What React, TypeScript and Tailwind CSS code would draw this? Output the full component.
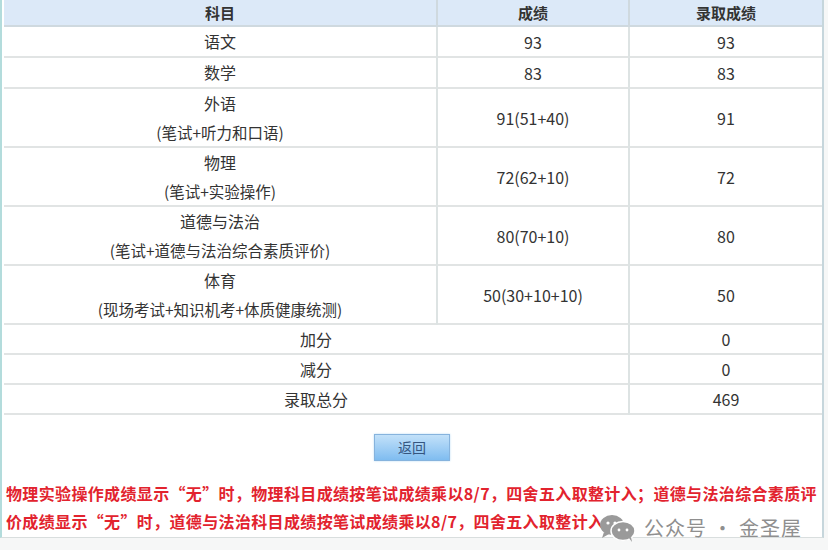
import React from "react";

const font = { fontFamily: '"Noto Sans CJK SC", "Noto Sans", sans-serif' };

type Row = { name: string; sub?: string; score: string; final: string };

const rows: Row[] = [
  { name: "语文", score: "93", final: "93" },
  { name: "数学", score: "83", final: "83" },
  { name: "外语", sub: "(笔试+听力和口语)", score: "91(51+40)", final: "91" },
  { name: "物理", sub: "(笔试+实验操作)", score: "72(62+10)", final: "72" },
  { name: "道德与法治", sub: "(笔试+道德与法治综合素质评价)", score: "80(70+10)", final: "80" },
  { name: "体育", sub: "(现场考试+知识机考+体质健康统测)", score: "50(30+10+10)", final: "50" },
];

const extra = [
  { name: "加分", v: "0" },
  { name: "减分", v: "0" },
  { name: "录取总分", v: "469" },
];

function WeChat() {
  return (
    <svg width="40" height="30" viewBox="0 0 40 30">
      <ellipse cx="14" cy="12" rx="12" ry="10" fill="#9a9a9a" />
      <path d="M6 19 L4 25 L11 21 Z" fill="#9a9a9a" />
      <ellipse cx="25" cy="18" rx="12" ry="9.5" fill="#9a9a9a" stroke="#fff" strokeWidth="1.5" />
      <path d="M31 25 L34 29 L33 24 Z" fill="#9a9a9a" />
      <circle cx="10" cy="10" r="1.6" fill="#fff" />
      <circle cx="17" cy="10" r="1.6" fill="#fff" />
      <circle cx="21" cy="17" r="1.4" fill="#fff" />
      <circle cx="29" cy="17" r="1.4" fill="#fff" />
    </svg>
  );
}

export default function App() {
  return (
    <div className="w-[828px] h-[550px] bg-[#f6f7f7] overflow-hidden" style={font}>
      <div className="w-[824px] h-[538px] bg-white border-l-2 border-r-2 border-b border-l-[#b3dcdc] border-r-[#c6d6dc] border-b-[#d9dede]">
        <table className="w-[818px] ml-[2px] border-collapse text-[#333] text-center">
          <colgroup>
            <col className="w-[433px]" />
            <col className="w-[192px]" />
            <col className="w-[193px]" />
          </colgroup>
          <thead>
            <tr className="h-[26px] bg-[#dce9f8] border-b-2 border-[#cfd9df]">
              <th className="text-[15px] font-bold leading-none">科目</th>
              <th className="text-[15px] font-bold leading-none border-l-2 border-[#cfd9df]">成绩</th>
              <th className="text-[15px] font-bold leading-none border-l-2 border-[#cfd9df]">录取成绩</th>
            </tr>
          </thead>
          <tbody>
            {rows.map((r) => (
              <tr key={r.name} className={`border-b-2 border-[#e1e4e4] ${r.sub ? "h-[59px]" : "h-[30px]"}`}>
                <td className="p-0">
                  <div className="text-[16px] leading-[29px]">{r.name}</div>
                  {r.sub && <div className="text-[15.5px] leading-[28px]">{r.sub}</div>}
                </td>
                <td className="p-0 text-[16px] border-l-2 border-[#dde3e3]">{r.score}</td>
                <td className="p-0 text-[16px] border-l-2 border-[#dde3e3]">{r.final}</td>
              </tr>
            ))}
            {extra.map((e) => (
              <tr key={e.name} className="h-[30px] border-b-2 border-[#e1e4e4]">
                <td colSpan={2} className="p-0 text-[16px]">{e.name}</td>
                <td className="p-0 text-[16px] border-l-2 border-[#dde3e3]">{e.v}</td>
              </tr>
            ))}
          </tbody>
        </table>
        <div className="flex justify-center mt-[19px]">
          <div className="w-[76px] h-[27px] flex items-center justify-center border border-[#86b3dd] bg-gradient-to-b from-[#c2e1f9] to-[#7fbcf0] text-[#35557f] text-[14px] shadow-[0_0_2px_#bcdcf5]">
            返回
          </div>
        </div>
        <div className="relative mt-[18px] pl-[4px] text-[#e2232e] font-bold text-[16px] leading-[28px] tracking-[0.35px] whitespace-nowrap">
          <div>物理实验操作成绩显示“无”时，物理科目成绩按笔试成绩乘以8/7，四舍五入取整计入；道德与法治综合素质评</div>
          <div>价成绩显示“无”时，道德与法治科目成绩按笔试成绩乘以8/7，四舍五入取整计入。</div>
          <div className="absolute left-[596px] top-[34px] flex items-center gap-[6px]">
            <WeChat />
            <span className="text-[#8f8f8f] text-[20px] font-normal tracking-[1px]">公众号 · 金圣屋</span>
          </div>
        </div>
      </div>
    </div>
  );
}
